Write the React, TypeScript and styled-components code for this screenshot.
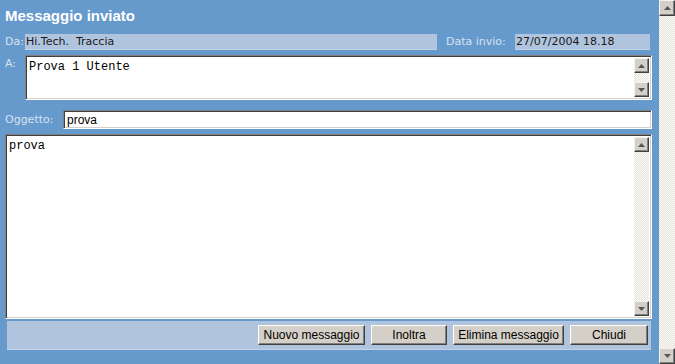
import styled, { createGlobalStyle } from "styled-components";

const Global = createGlobalStyle`
  html, body {
    margin: 0;
    padding: 0;
    background: #6699cc;
    overflow: hidden;
  }
`;

const Page = styled.div`
  display: flex;
  width: 675px;
  height: 364px;
  background: #6699cc;
`;

const Panel = styled.div`
  flex: 1;
  display: flex;
  flex-direction: column;
  padding: 0 7px 0 5px;
  font-family: "DejaVu Sans", Verdana, sans-serif;
`;

const Title = styled.h1`
  margin: 0;
  padding: 6px 0 8px;
  height: 20px;
  line-height: 20px;
  font-family: "Liberation Sans", Arial, sans-serif;
  font-size: 15px;
  font-weight: bold;
  color: #ffffff;
`;

const Row = styled.div<{ $h: number; $gap: number }>`
  display: flex;
  align-items: stretch;
  height: ${(p) => p.$h}px;
  margin-bottom: ${(p) => p.$gap}px;
`;

const Label = styled.span<{ $w?: number; $top?: boolean }>`
  width: ${(p) => (p.$w ? `${p.$w}px` : "auto")};
  flex: none;
  align-self: ${(p) => (p.$top ? "flex-start" : "center")};
  font-size: 11px;
  line-height: 16px;
  padding-top: ${(p) => (p.$top ? "1px" : "0")};
  color: #d6e2f0;
  white-space: nowrap;
`;

const ReadField = styled.div<{ $w?: number }>`
  flex: ${(p) => (p.$w ? "none" : "1")};
  width: ${(p) => (p.$w ? `${p.$w}px` : "auto")};
  box-sizing: border-box;
  background: #b0c4de;
  border-bottom: 1px solid #c4d4ea;
  padding: 0 1px;
  font-size: 11px;
  line-height: 15px;
  color: #1a1a1a;
  white-space: pre;
`;

const Inset = styled.div`
  flex: 1;
  display: flex;
  box-sizing: border-box;
  background: #ffffff;
  border-top: 1px solid #808080;
  border-left: 1px solid #808080;
  border-right: 1px solid #ffffff;
  border-bottom: 1px solid #ffffff;
  box-shadow: inset 1px 1px #404040, inset -1px -1px #d4d0c8;
  padding: 2px;
`;

const MonoText = styled.div`
  flex: 1;
  padding: 2px 0 0 1px;
  font-family: "Liberation Mono", "Courier New", monospace;
  font-size: 12px;
  line-height: 14px;
  color: #000;
  white-space: pre;
`;

const InputText = styled.div`
  flex: 1;
  padding: 0 0 0 1px;
  font-family: "Liberation Sans", Arial, sans-serif;
  font-size: 12px;
  line-height: 14px;
  color: #000;
`;

const Track = styled.div<{ $w: number }>`
  width: ${(p) => p.$w}px;
  flex: none;
  display: flex;
  flex-direction: column;
  justify-content: space-between;
  background: repeating-conic-gradient(#fbfaf7 0 25%, #e6e3da 0 50%) 0 0 / 2px 2px;
`;

const Arrow = styled.div<{ $size: number }>`
  width: ${(p) => p.$size}px;
  height: ${(p) => p.$size}px;
  box-sizing: border-box;
  display: flex;
  align-items: center;
  justify-content: center;
  background: #d4d0c8;
  border-top: 1px solid #f4f2ee;
  border-left: 1px solid #f4f2ee;
  border-right: 1px solid #404040;
  border-bottom: 1px solid #404040;
  box-shadow: inset -1px -1px #808080;
`;

const ArrowButton = ({ down, size }: { down?: boolean; size: number }) => (
  <Arrow $size={size}>
    <svg width="7" height="4" viewBox="0 0 7 4">
      <path d={down ? "M0 0 H7 L3.5 4 Z" : "M0 4 H7 L3.5 0 Z"} fill="#555" />
    </svg>
  </Arrow>
);

const Scroller = ({ w, size }: { w: number; size: number }) => (
  <Track $w={w}>
    <ArrowButton size={size} />
    <ArrowButton size={size} down />
  </Track>
);

const BodyBox = styled.div`
  height: 185px;
  display: flex;
  margin-bottom: 2px;
`;

const Bar = styled.div`
  height: 28px;
  margin: 0 1px 0 2px;
  display: flex;
  align-items: center;
  justify-content: flex-end;
  gap: 6px;
  padding-right: 3px;
  background: #b0c4de;
  border-bottom: 1px solid #c4d4ea;
`;

const Button = styled.button<{ $w: number }>`
  width: ${(p) => p.$w}px;
  height: 20px;
  padding: 0;
  background: #d4d0c8;
  border-top: 1px solid #ffffff;
  border-left: 1px solid #ffffff;
  border-right: 1px solid #404040;
  border-bottom: 1px solid #404040;
  box-shadow: inset -1px -1px #808080;
  font-family: "Liberation Sans", Arial, sans-serif;
  font-size: 12px;
  color: #000;
`;

export default function App() {
  return (
    <Page>
      <Global />
      <Panel>
        <Title>Messaggio inviato</Title>
        <Row $h={16} $gap={5} style={{ marginRight: 2 }}>
          <Label $w={20}>Da:</Label>
          <ReadField>{"Hi.Tech.  Traccia"}</ReadField>
          <Label $w={69} style={{ marginLeft: 9 }}>
            Data invio:
          </Label>
          <ReadField $w={135}>27/07/2004 18.18</ReadField>
        </Row>
        <Row $h={45} $gap={10}>
          <Label $w={20} $top>
            A:
          </Label>
          <Inset>
            <MonoText>Prova 1 Utente</MonoText>
            <Scroller w={15} size={15} />
          </Inset>
        </Row>
        <Row $h={19} $gap={5}>
          <Label $w={58}>Oggetto:</Label>
          <Inset>
            <InputText>prova</InputText>
          </Inset>
        </Row>
        <BodyBox>
          <Inset>
            <MonoText>prova</MonoText>
            <Scroller w={15} size={15} />
          </Inset>
        </BodyBox>
        <Bar>
          <Button $w={107}>Nuovo messaggio</Button>
          <Button $w={76}>Inoltra</Button>
          <Button $w={111}>Elimina messaggio</Button>
          <Button $w={78}>Chiudi</Button>
        </Bar>
      </Panel>
      <Scroller w={16} size={16} />
    </Page>
  );
}
